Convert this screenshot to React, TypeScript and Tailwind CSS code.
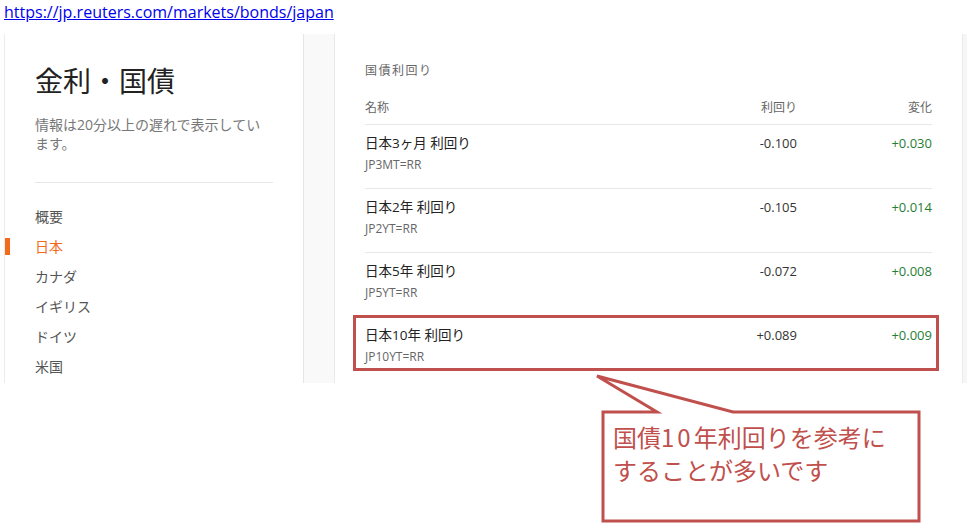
const rows = [
  { name: '日本3ヶ月 利回り', code: 'JP3MT=RR', yld: '-0.100', chg: '+0.030' },
  { name: '日本2年 利回り', code: 'JP2YT=RR', yld: '-0.105', chg: '+0.014' },
  { name: '日本5年 利回り', code: 'JP5YT=RR', yld: '-0.072', chg: '+0.008' },
  { name: '日本10年 利回り', code: 'JP10YT=RR', yld: '+0.089', chg: '+0.009' },
];

const navItems = ['概要', '日本', 'カナダ', 'イギリス', 'ドイツ', '米国'];

export default function App() {
  return (
    <div className="relative w-[972px] h-[526px] overflow-hidden bg-white">
      {/* URL caption */}
      <div className="h-[34px] pl-[4px] pt-[2px] leading-[20px]">
        <a
          href="#"
          className="text-[16px] text-[#0000ee] underline font-['Open_Sans',sans-serif]"
        >
          https://jp.reuters.com/markets/bonds/japan
        </a>
      </div>

      {/* Screenshot area */}
      <div className="ml-[4px] w-[963px] h-[349px] flex border-l border-[#ececec] font-['Open_Sans','Noto_Sans_CJK_JP',sans-serif] overflow-hidden">
        {/* Left panel */}
        <aside className="w-[299px] shrink-0 bg-white border-r border-[#e6e6e6] pt-[28px]">
          <div className="pl-[30px] pr-[25px]">
            <h1 className="text-[28px] leading-[36px] text-[#222] font-['Noto_Sans_CJK_JP',sans-serif]">
              金利・国債
            </h1>
            <p className="mt-[17px] w-[238px] text-[14px] leading-[19px] text-[#777]">
              情報は20分以上の遅れで表示しています。
            </p>
            <div className="mt-[29px] w-[238px] border-t border-[#e6e6e6]" />
          </div>
          <nav className="mt-[18px]">
            {navItems.map((item) => {
              const active = item === '日本';
              return (
                <div key={item} className="flex items-center h-[30px]">
                  <div className={active ? 'w-[5px] h-[17px] bg-[#f26b1d]' : 'w-[5px] h-[17px]'} />
                  <span
                    className={
                      active
                        ? 'pl-[25px] text-[14px] text-[#f26b1d]'
                        : 'pl-[25px] text-[14px] text-[#555]'
                    }
                  >
                    {item}
                  </span>
                </div>
              );
            })}
          </nav>
        </aside>

        {/* Gutter */}
        <div className="w-[31px] shrink-0 bg-[#f9f9f9] border-r border-[#e9e9e9]" />

        {/* Main content */}
        <main className="flex-1 bg-white border-r border-[#ebebeb] px-[30px] pt-[27px]">
          <div className="text-[12px] leading-[20px] tracking-[1.5px] text-[#666]">国債利回り</div>
          <div className="mt-[10px] h-[34px] flex items-center border-b border-[#e8e8e8] text-[12px] text-[#666]">
            <div className="flex-1">名称</div>
            <div className="w-[120px] text-right">利回り</div>
            <div className="w-[135px] text-right">変化</div>
          </div>
          {rows.map((r, i) => (
            <div
              key={r.code}
              className={
                i < rows.length - 1
                  ? 'h-[64px] flex items-start pt-[9px] border-b border-[#e8e8e8]'
                  : 'h-[64px] flex items-start pt-[9px]'
              }
            >
              <div className="flex-1">
                <div className="text-[13.5px] leading-[18px] text-[#222]">{r.name}</div>
                <div className="mt-[6px] text-[12px] leading-[14px] text-[#666]">{r.code}</div>
              </div>
              <div className="w-[120px] text-right text-[13px] leading-[18px] text-[#333]">{r.yld}</div>
              <div className="w-[135px] text-right text-[13px] leading-[18px] text-[#1f8035]">{r.chg}</div>
            </div>
          ))}
        </main>
        <div className="w-[4px] bg-[#f6f6f6]" />
      </div>

      {/* Highlight box around the 10-year row */}
      <div className="absolute left-[353px] top-[315px] w-[586px] h-[56px] border-[3px] border-[#c0504d]" />

      {/* Callout */}
      <svg className="absolute left-0 top-0 w-[972px] h-[526px] pointer-events-none" viewBox="0 0 972 526">
        <path
          d="M603 412 L657 412 L597 376 L733 412 L919 412 L919 521 L603 521 Z"
          fill="#ffffff"
          stroke="#c0504d"
          strokeWidth="3"
          strokeLinejoin="miter"
        />
      </svg>
      <div className="absolute left-[613px] top-[420px] text-[24px] leading-[33px] text-[#c0504d] font-['Noto_Sans_CJK_JP',sans-serif]">
        国債<span className="tracking-[3px]">10</span>年利回りを参考に
        <br />
        することが多いです
      </div>
    </div>
  );
}
